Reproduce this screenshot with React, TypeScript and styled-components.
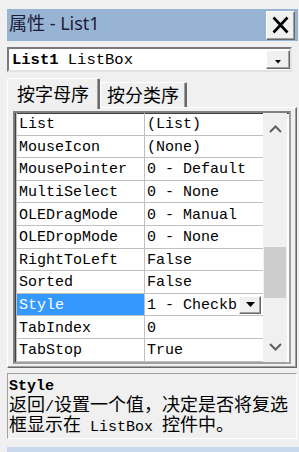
import styled, { createGlobalStyle } from 'styled-components';

import type { FC } from 'react';

const GlobalStyle = createGlobalStyle`
  html, body {
    margin: 0;
    padding: 0;
    background: #f0f0f0;
  }
  body {
    width: 299px;
    height: 452px;
    overflow: hidden;
  }
`;

const Window = styled.div`
  box-sizing: border-box;
  width: 299px;
  height: 452px;
  padding: 9px 0 0 7px;
  display: flex;
  flex-direction: column;
  font-family: 'Noto Sans CJK SC', sans-serif;
  color: #000;
`;

const TitleBar = styled.div`
  height: 32px;
  margin-right: 1px;
  background: #98b4d4;
  display: flex;
  align-items: center;
  justify-content: space-between;
  padding: 0 3px 0 2px;
`;

const Title = styled.span`
  font-family: 'Noto Sans', 'Noto Sans CJK SC', sans-serif;
  font-size: 18px;
  line-height: 20px;
  color: #1c1c34;
  margin-top: -4px;
`;

const RaisedButton = styled.div<{ w: number; h: number }>`
  box-sizing: border-box;
  width: ${(p) => p.w}px;
  height: ${(p) => p.h}px;
  background: #f0f0f0;
  border: 1px solid;
  border-color: #ffffff #696969 #696969 #ffffff;
  box-shadow: inset -1px -1px 0 #a0a0a0;
  display: flex;
  align-items: center;
  justify-content: center;
  flex-shrink: 0;
`;

const Combo = styled.div`
  box-sizing: border-box;
  margin-top: 6px;
  margin-right: 7px;
  height: 25px;
  background: #fff;
  border: 2px solid;
  border-color: #7a7a7a #e3e3e3 #e3e3e3 #7a7a7a;
  display: flex;
  align-items: center;
  justify-content: space-between;
  padding: 0 0 0 3px;
`;

const ComboText = styled.span`
  font-family: 'Liberation Mono', monospace;
  font-size: 15.5px;
  white-space: pre;
`;

const Bold = styled.b`
  font-weight: bold;
`;

const TabRow = styled.div`
  display: flex;
  align-items: flex-end;
  margin-top: 6px;
  height: 29px;
`;

const Tab = styled.div<{ active?: boolean; w: number }>`
  box-sizing: border-box;
  position: relative;
  z-index: ${(p) => (p.active ? 2 : 1)};
  width: ${(p) => p.w}px;
  height: ${(p) => (p.active ? 31 : 25)}px;
  margin-bottom: ${(p) => (p.active ? -2 : 0)}px;
  background: #f0f0f0;
  border-top: 1px solid #fff;
  border-left: 1px solid #fff;
  border-right: 2px solid #696969;
  border-radius: 2px 2px 0 0;
  box-shadow: inset -1px 0 0 #a0a0a0;
  font-size: 18px;
  line-height: 20px;
  display: flex;
  justify-content: center;
  padding-top: ${(p) => (p.active ? 4 : 1)}px;
`;

const Panel = styled.div`
  margin-right: 2px;
  border-top: 1px solid #fff;
  border-left: 1px solid #fff;
  border-right: 1px solid #696969;
  border-bottom: 1px solid #696969;
  box-shadow: inset -1px -1px 0 #a0a0a0;
  padding: 3px 5px 3px 5px;
`;

const Grid = styled.div`
  display: flex;
  background: #fff;
  border: 2px solid;
  border-color: #808080 #a0a0a0 #a0a0a0 #808080;
  box-shadow: inset 1px 1px 0 #404040;
`;

const Rows = styled.div`
  flex: 1;
  border-left: 1px solid #c0c0c0;
  margin-left: 1px;
`;

const ROW_H = 22.6;

const Row = styled.div`
  box-sizing: border-box;
  display: grid;
  grid-template-columns: 128px 1fr;
  height: ${ROW_H}px;
  border-bottom: 1px solid #c0c0c0;
  font-family: 'Liberation Mono', monospace;
  font-size: 15px;
  white-space: pre;
`;

const NameCell = styled.div<{ selected?: boolean }>`
  display: flex;
  align-items: center;
  padding: 2px 0 0 2px;
  border-right: 1px solid #c0c0c0;
  background: ${(p) => (p.selected ? '#3399ff' : 'transparent')};
  color: ${(p) => (p.selected ? '#fff' : '#000')};
  overflow: hidden;
`;

const ValueCell = styled.div`
  display: flex;
  align-items: center;
  justify-content: space-between;
  padding: 0 2px 0 2px;
  overflow: hidden;
`;

const ValueText = styled.span`
  padding-top: 2px;
`;

const ScrollBar = styled.div`
  width: 24px;
  margin-right: 2px;
  background: #f0f0f0;
  display: flex;
  flex-direction: column;
`;

const ArrowBox = styled.div<{ h: number }>`
  height: ${(p) => p.h}px;
  display: flex;
  align-items: center;
  justify-content: center;
`;

const Track = styled.div`
  flex: 1;
`;

const Thumb = styled.div<{ offset: number; size: number }>`
  margin: ${(p) => p.offset}px 1px 0;
  height: ${(p) => p.size}px;
  background: #cdcdcd;
`;

const Description = styled.div`
  box-sizing: border-box;
  margin-top: 5px;
  margin-right: 2px;
  height: 66px;
  border: 1px solid;
  border-color: #a0a0a0 #ffffff #ffffff #a0a0a0;
  padding: 5px 0 0 1px;
  overflow: hidden;
`;

const DescTitle = styled.div`
  font-family: 'Liberation Mono', monospace;
  font-weight: bold;
  font-size: 15px;
  line-height: 15px;
`;

const DescText = styled.div`
  font-size: 18px;
  line-height: 19px;
`;

const Mono = styled.span`
  font-family: 'Liberation Mono', monospace;
  font-size: 15px;
  line-height: 12px;
  white-space: pre;
`;

const Footer = styled.div`
  margin-top: auto;
  height: 5px;
  background: #c8d8ec;
`;

const Chevron: FC<{ up?: boolean }> = ({ up }) => (
  <svg width="13" height="8" viewBox="0 0 13 8">
    <polyline
      points={up ? '1,7 6.5,1.5 12,7' : '1,1 6.5,6.5 12,1'}
      fill="none"
      stroke="#606060"
      strokeWidth="2"
    />
  </svg>
);

const DownTriangle: FC<{ w: number; h: number }> = ({ w, h }) => (
  <svg width={w} height={h} viewBox={`0 0 ${w} ${h}`}>
    <polygon points={`0,0 ${w},0 ${w / 2},${h}`} fill="#000" />
  </svg>
);

const props: { name: string; value: string }[] = [
  { name: 'List', value: '(List)' },
  { name: 'MouseIcon', value: '(None)' },
  { name: 'MousePointer', value: '0 - Default' },
  { name: 'MultiSelect', value: '0 - None' },
  { name: 'OLEDragMode', value: '0 - Manual' },
  { name: 'OLEDropMode', value: '0 - None' },
  { name: 'RightToLeft', value: 'False' },
  { name: 'Sorted', value: 'False' },
  { name: 'Style', value: '1 - Checkb' },
  { name: 'TabIndex', value: '0' },
  { name: 'TabStop', value: 'True' },
];

const SELECTED = 'Style';

export default function App() {
  return (
    <>
      <GlobalStyle />
      <Window>
        <TitleBar>
          <Title>属性 - List1</Title>
          <RaisedButton w={29} h={29}>
            <svg width="17" height="18" viewBox="0 0 17 18">
              <path d="M1.5 1.5 L15.5 16.5 M15.5 1.5 L1.5 16.5" stroke="#000" strokeWidth="2.6" />
            </svg>
          </RaisedButton>
        </TitleBar>

        <Combo>
          <ComboText>
            <Bold>List1</Bold> ListBox
          </ComboText>
          <RaisedButton w={24} h={19}>
            <svg width="6" height="4" viewBox="0 0 6 4" style={{ marginTop: 4 }}>
              <polygon points="0,0 6,0 3,3.5" fill="#000" />
            </svg>
          </RaisedButton>
        </Combo>

        <TabRow>
          <Tab active w={93}>按字母序</Tab>
          <Tab w={87}>按分类序</Tab>
        </TabRow>

        <Panel>
          <Grid>
            <Rows>
              {props.map((p) => {
                const selected = p.name === SELECTED;
                return (
                  <Row key={p.name}>
                    <NameCell selected={selected}>{p.name}</NameCell>
                    <ValueCell>
                      <ValueText>{p.value}</ValueText>
                      {selected && (
                        <RaisedButton w={22} h={18}>
                          <DownTriangle w={9} h={5} />
                        </RaisedButton>
                      )}
                    </ValueCell>
                  </Row>
                );
              })}
            </Rows>
            <ScrollBar>
              <ArrowBox h={32}>
                <Chevron up />
              </ArrowBox>
              <Track>
                <Thumb offset={102} size={51} />
              </Track>
              <ArrowBox h={30}>
                <Chevron />
              </ArrowBox>
            </ScrollBar>
          </Grid>
        </Panel>

        <Description>
          <DescTitle>Style</DescTitle>
          <DescText>
            返回<Mono>/</Mono>设置一个值，决定是否将复选
            <br />
            框显示在<Mono> ListBox </Mono>控件中。
          </DescText>
        </Description>

        <Footer />
      </Window>
    </>
  );
}
